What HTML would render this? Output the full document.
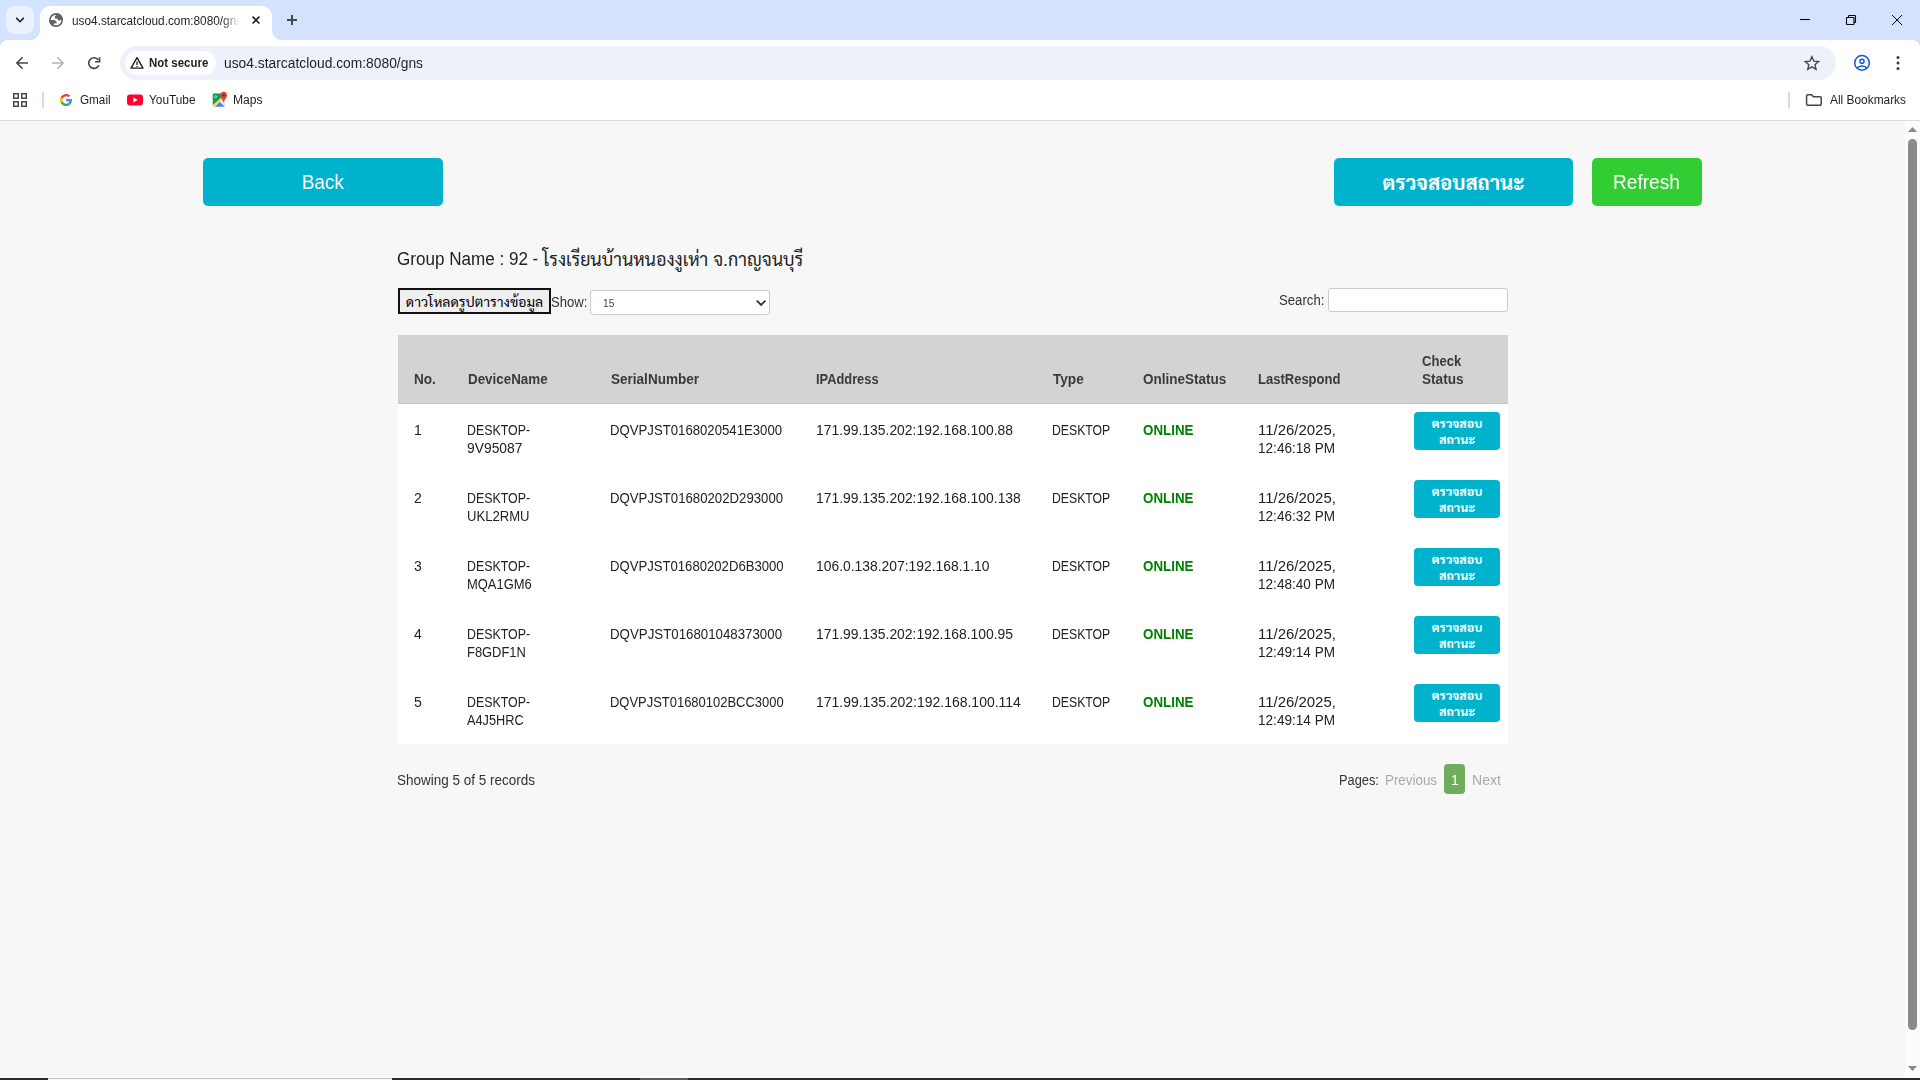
<!DOCTYPE html>
<html lang="th">
<head>
<meta charset="utf-8">
<title>uso4.starcatcloud.com:8080/gns</title>
<style>
*{box-sizing:border-box;margin:0;padding:0}
html,body{width:1920px;height:1080px;overflow:hidden;background:#f7f7f7}
body{position:relative;font-family:"Liberation Sans","Sarabun","Noto Sans Thai","Loma",sans-serif;color:#222}
.abs,.t,svg{position:absolute}
.t{white-space:pre;line-height:1;transform-origin:0 0;display:block}
/* ---------- browser chrome ---------- */
#tabstrip{left:0;top:0;width:1920px;height:52px;background:#d3e3fd}
#tabsearch{left:6px;top:6px;width:28px;height:28px;border-radius:9px;background:#ebf1fd}
#tab{left:40px;top:6px;width:232px;height:34px;background:#fff;border-radius:10px 10px 0 0}
#tab:before,#tab:after{content:"";position:absolute;bottom:0;width:10px;height:10px}
#tab:before{left:-10px;background:radial-gradient(circle at 0 0,rgba(255,255,255,0) 9.5px,#fff 10.5px)}
#tab:after{right:-10px;background:radial-gradient(circle at 100% 0,rgba(255,255,255,0) 9.5px,#fff 10.5px)}
#tabtitle{left:72px;top:14px;width:168px;height:16px;overflow:hidden;-webkit-mask-image:linear-gradient(90deg,#000 150px,transparent 168px);mask-image:linear-gradient(90deg,#000 150px,transparent 168px)}
#toolbar{left:0;top:40px;width:1920px;height:42px;background:#fff;border-radius:8px 8px 0 0}
#omni{left:120px;top:46px;width:1716px;height:34px;border-radius:17px;background:#edf2fa}
#chip{left:125px;top:51px;width:91px;height:24px;border-radius:12px;background:#fff}
#bmbar{left:0;top:82px;width:1920px;height:39px;background:#fff;border-bottom:1px solid #dcdcdc}
.vsep{top:92px;width:2px;height:16px;background:#cddbf7}
/* ---------- page ---------- */
#page{left:0;top:121px;width:1905px;height:957px;background:#f7f7f7}
#sbar{left:1905px;top:121px;width:15px;height:957px;background:#fcfcfc}
#thumb{left:1908px;top:139px;width:9px;height:891px;border-radius:4.5px;background:#8b8b8b}
.btn{border-radius:5px}
.cyan{background:#00b3cc}
.green{background:#32cd32}
.thai{font-family:"Liberation Sans","Sarabun","Noto Sans Thai","Loma",sans-serif;white-space:nowrap;text-align:center}
#dl{overflow:hidden;left:398px;top:288px;width:153px;height:26px;border:2px solid #111;background:#efefef;font-size:14px;line-height:24px;color:#000}
#sel{left:590px;top:290px;width:180px;height:25px;border:1px solid #c8cdd3;border-radius:3px;background:#fff}
#search{left:1328px;top:288px;width:180px;height:24px;border:1px solid #c8cdd3;border-radius:3px;background:#fff}
#thead{left:398px;top:335px;width:1110px;height:69px;background:#d3d3d3;border-bottom:1px solid #c4c4c4}
#tbody{left:398px;top:404px;width:1110px;height:340px;background:#fff}
.rb{overflow:hidden;left:1414px;width:86px;height:38px;border-radius:4px;background:#00b3cc;color:#fff;font-size:12.4px;font-weight:bold;line-height:16px;padding-top:4px}
#pg1{left:1444px;top:764px;width:21px;height:30px;border-radius:4px;background:#6fad5c}
</style>
</head>
<body>
<!-- ===== browser chrome ===== -->
<div id="tabstrip" class="abs"></div>
<div id="tabsearch" class="abs"></div>
<div id="tab" class="abs"></div>
<div id="toolbar" class="abs"></div>
<div id="omni" class="abs"></div>
<div id="chip" class="abs"></div>
<div id="bmbar" class="abs"></div>
<div class="abs vsep" style="left:42px"></div>
<div class="abs vsep" style="left:1788px"></div>
<div id="tabtitle" class="abs"><span class="t" style="left:0;top:0.5px;font-size:12px;color:#1f1f1f;transform:scaleX(0.985)">uso4.starcatcloud.com:8080/gns</span></div>
<!-- ===== page ===== -->
<div id="page" class="abs"></div>
<div id="sbar" class="abs"></div>
<div id="thumb" class="abs"></div>
<div class="abs btn cyan" style="left:203px;top:158px;width:240px;height:48px"></div>
<div class="abs btn cyan thai" style="left:1334px;top:158px;width:239px;height:48px;color:#fff;font-size:20.3px;font-weight:bold;line-height:50px">ตรวจสอบสถานะ</div>
<div class="abs btn green" style="left:1592px;top:158px;width:110px;height:48px"></div>
<div class="abs thai" style="left:542.5px;top:244.5px;font-size:17.85px;line-height:30px;color:#222">โรงเรียนบ้านหนองงูเห่า จ.กาญจนบุรี</div>
<div id="dl" class="abs thai">ดาวโหลดรูปตารางข้อมูล</div>
<div id="sel" class="abs"></div>
<div id="search" class="abs"></div>
<div id="thead" class="abs"></div>
<div id="tbody" class="abs"></div>
<div class="abs rb thai" style="top:412px">ตรวจสอบ<br>สถานะ</div>
<div class="abs rb thai" style="top:480px">ตรวจสอบ<br>สถานะ</div>
<div class="abs rb thai" style="top:548px">ตรวจสอบ<br>สถานะ</div>
<div class="abs rb thai" style="top:616px">ตรวจสอบ<br>สถานะ</div>
<div class="abs rb thai" style="top:684px">ตรวจสอบ<br>สถานะ</div>
<div id="pg1" class="abs"></div>
<!-- tab strip icons -->
<svg style="left:0;top:0" width="320" height="40" viewBox="0 0 320 40" fill="none">
<path d="M16.200 17.900 20 21.700l3.800-3.800" stroke="#1f1f1f" stroke-width="1.600"/>
<clipPath id="gc"><circle cx="56.050" cy="20" r="6.900"/></clipPath>
<circle cx="56.050" cy="20" r="6.150" stroke="#5f6368" stroke-width="1.600"/>
<g clip-path="url(#gc)" fill="#5f6368"><path d="M57.600 13.300 54.800 16.600v1.900h2.200l1.800 2.300 2.100-1.100 2.400.3V12z"/><path d="M49 20.100h5.700l2 2.100v1l-2.900.2-.6 4.200H48z"/></g>
<path d="M252.600 16.700l6.800 6.800M259.400 16.700l-6.800 6.800" stroke="#1f1f1f" stroke-width="1.700"/>
<path d="M287 20h10M292 15v10" stroke="#474747" stroke-width="2"/>
</svg>
<!-- window controls -->
<svg style="left:1780px;top:0" width="140" height="40" viewBox="1780 0 140 40" fill="none" stroke="#000" stroke-width="1.1">
<path d="M1800 19.500h10"/>
<rect x="1846.500" y="17.500" width="7.500" height="7" rx=".7"/>
<path d="M1848.500 17.200V16.200a.7.700 0 0 1 .7-.7h5.600a.7.700 0 0 1 .7.700v5.600a.7.700 0 0 1-.7.700h-.8"/>
<path d="M1892 15l10.100 10.100M1902.100 15l-10.100 10.100" stroke-width="1"/>
</svg>
<!-- toolbar nav icons -->
<svg style="left:0;top:40px" width="240" height="42" viewBox="0 40 240 42" fill="none">
<path d="M28 63H17.200M22.600 57.300 16.900 63l5.700 5.700" stroke="#444746" stroke-width="1.600"/>
<path d="M52 63h10.800M57.400 57.300 63.100 63l-5.700 5.700" stroke="#b4b4b4" stroke-width="1.600"/>
<path d="M98.400 60.100A5.300 5.300 0 1 0 98.900 65.200" stroke="#444746" stroke-width="1.600"/>
<path d="M99.600 57.200v4.500h-4.500" stroke="#444746" stroke-width="1.600"/>
<path d="M137 57.700 143 68.100h-12z" stroke="#1f1f1f" stroke-width="1.400" stroke-linejoin="round"/>
<path d="M137 61.600v3.300M137 65.900v1.200" stroke="#1f1f1f" stroke-width="1.300"/>
</svg>
<!-- toolbar right icons -->
<svg style="left:1790px;top:40px" width="130" height="42" viewBox="1790 40 130 42" fill="none">
<path d="M1811.900 56.700l1.900 4.400 4.800.4-3.650 3.150 1.100 4.700-4.150-2.500-4.150 2.500 1.100-4.700-3.650-3.150 4.800-.4z" stroke="#444746" stroke-width="1.400" stroke-linejoin="miter"/>
<circle cx="1862" cy="62.900" r="7.300" stroke="#0b57d0" stroke-width="1.500"/>
<circle cx="1862" cy="61.300" r="2.100" stroke="#0b57d0" stroke-width="1.400"/>
<path d="M1856.900 68.300c1-1.500 3-2.300 5.100-2.300s4.100.8 5.100 2.300" stroke="#0b57d0" stroke-width="1.400"/>
<circle cx="1898" cy="57.600" r="1.500" fill="#3c3c3c"/><circle cx="1898" cy="63" r="1.500" fill="#3c3c3c"/><circle cx="1898" cy="68.400" r="1.500" fill="#3c3c3c"/>
</svg>
<!-- bookmarks bar icons -->
<svg style="left:0;top:82px" width="240" height="38" viewBox="0 82 240 38" fill="none">
<g stroke="#444746" stroke-width="1.500"><rect x="13.750" y="93.750" width="4.500" height="4.500"/><rect x="21.750" y="93.750" width="4.500" height="4.500"/><rect x="13.750" y="101.750" width="4.500" height="4.500"/><rect x="21.750" y="101.750" width="4.500" height="4.500"/></g>
<g transform="translate(60 93.900) scale(0.254)">
<path fill="#EA4335" d="M24 9.500c3.540 0 6.710 1.220 9.210 3.600l6.850-6.850C35.900 2.380 30.470 0 24 0 14.620 0 6.510 5.380 2.560 13.220l7.980 6.190C12.430 13.720 17.740 9.500 24 9.500z"/>
<path fill="#4285F4" d="M46.980 24.550c0-1.570-.15-3.090-.38-4.550H24v9.020h12.940c-.58 2.960-2.260 5.480-4.780 7.180l7.730 6c4.510-4.180 7.090-10.360 7.090-17.650z"/>
<path fill="#FBBC05" d="M10.530 28.590c-.48-1.450-.76-2.990-.76-4.590s.27-3.140.76-4.590l-7.980-6.190C.92 16.460 0 20.120 0 24c0 3.880.92 7.540 2.560 10.780l7.970-6.190z"/>
<path fill="#34A853" d="M24 48c6.480 0 11.930-2.130 15.890-5.810l-7.730-6c-2.150 1.450-4.920 2.300-8.160 2.300-6.260 0-11.570-4.220-13.470-9.910l-7.980 6.190C6.510 42.620 14.620 48 24 48z"/>
</g>
<rect x="127" y="94.400" width="16" height="11" rx="3" fill="#ff0033"/>
<path d="M133.400 97.400v5l4.400-2.500z" fill="#fff"/>
<g transform="translate(212.500 93.300)">
<path d="M1 .2h7.600v4.400L.2 12V1a.8.800 0 0 1 .8-.8z" fill="#0f9d58"/>
<path d="M.2 12 8.600 4.600l1.300 1.100L1.700 13.500H1a.8.800 0 0 1-.8-.8z" fill="#fdd835"/>
<path d="M2.300 13.500l5.100-5.100 5 5.100z" fill="#4285f4"/>
<path d="M7.400 8.400l2.500-2.700h2.900v7a.8.800 0 0 1-.4.800z" fill="#e4e7ea"/>
<circle cx="3.100" cy="3.500" r="1.100" stroke="#cfe9dc" stroke-width=".7"/>
<path d="M11.100 -1.500c-1.900 0-3.400 1.500-3.400 3.400 0 2.500 2.700 4.300 3.400 7.600.7-3.300 3.400-5.100 3.400-7.600 0-1.900-1.500-3.400-3.400-3.400z" fill="#db4437"/>
<circle cx="11.100" cy="1.900" r="1.200" fill="#7b1f16"/>
</g>
</svg>
<svg style="left:1800px;top:82px" width="40" height="38" viewBox="1800 82 40 38" fill="none">
<path d="M1807.700 94.800h3.900l1.800 1.900h6.700a1.100 1.100 0 0 1 1.100 1.100v6.300a1.100 1.100 0 0 1-1.100 1.100h-12.400a1.100 1.100 0 0 1-1.100-1.100v-8.200a1.100 1.100 0 0 1 1.100-1.100z" stroke="#444746" stroke-width="1.500" stroke-linejoin="round"/>
</svg>
<!-- page: select chevron, scrollbar arrows -->
<svg style="left:750px;top:295px" width="20" height="16" viewBox="750 295 20 16" fill="none"><path d="M756.800 300.600l4.300 4.300 4.300-4.300" stroke="#333" stroke-width="1.800"/></svg>
<svg style="left:1905px;top:121px;z-index:5" width="15" height="957" viewBox="1905 121 15 957"><path d="M1908 132l4.500-5 4.500 5z" fill="#8b8b8b"/><path d="M1908 1066l4.500 5 4.500-5z" fill="#8b8b8b"/></svg>

<span class="t" style="left:149.0px;top:56.64px;font-size:12px;color:#1f1f1f;transform:scaleX(0.9560);font-weight:bold">Not secure</span>
<span class="t" style="left:224.0px;top:56.15px;font-size:14px;color:#1f1f1f;transform:scaleX(0.9872)">uso4.starcatcloud.com:8080/gns</span>
<span class="t" style="left:80.0px;top:93.54px;font-size:12px;color:#1f1f1f;transform:scaleX(0.9763)">Gmail</span>
<span class="t" style="left:148.6px;top:93.54px;font-size:12px;color:#1f1f1f;transform:scaleX(0.9861)">YouTube</span>
<span class="t" style="left:232.6px;top:93.54px;font-size:12px;color:#1f1f1f;transform:scaleX(1.0087)">Maps</span>
<span class="t" style="left:1829.6px;top:93.54px;font-size:12px;color:#1f1f1f;transform:scaleX(0.9910)">All Bookmarks</span>
<span class="t" style="left:302.1px;top:172.47px;font-size:20px;color:#fff;transform:scaleX(0.9419)">Back</span>
<span class="t" style="left:1613.1px;top:172.47px;font-size:20px;color:#fff;transform:scaleX(0.9543)">Refresh</span>
<span class="t" style="left:396.8px;top:250.06px;font-size:18px;color:#222;transform:scaleX(0.9479)">Group Name : 92 -</span>
<span class="t" style="left:551.3px;top:295.15px;font-size:14px;color:#333;transform:scaleX(0.9364)">Show:</span>
<span class="t" style="left:603.4px;top:298.01px;font-size:10.5px;color:#444;transform:scaleX(0.9754)">15</span>
<span class="t" style="left:1279.3px;top:293.15px;font-size:14px;color:#333;transform:scaleX(0.9407)">Search:</span>
<span class="t" style="left:413.8px;top:372.15px;font-size:14px;color:#3a3a3a;transform:scaleX(0.9693);font-weight:bold">No.</span>
<span class="t" style="left:467.5px;top:372.15px;font-size:14px;color:#3a3a3a;transform:scaleX(0.9565);font-weight:bold">DeviceName</span>
<span class="t" style="left:610.8px;top:372.15px;font-size:14px;color:#3a3a3a;transform:scaleX(0.9671);font-weight:bold">SerialNumber</span>
<span class="t" style="left:816.3px;top:372.15px;font-size:14px;color:#3a3a3a;transform:scaleX(0.9169);font-weight:bold">IPAddress</span>
<span class="t" style="left:1052.8px;top:372.15px;font-size:14px;color:#3a3a3a;transform:scaleX(0.9714);font-weight:bold">Type</span>
<span class="t" style="left:1142.5px;top:372.15px;font-size:14px;color:#3a3a3a;transform:scaleX(0.9634);font-weight:bold">OnlineStatus</span>
<span class="t" style="left:1258.1px;top:372.15px;font-size:14px;color:#3a3a3a;transform:scaleX(0.9292);font-weight:bold">LastRespond</span>
<span class="t" style="left:1422.1px;top:354.15px;font-size:14px;color:#3a3a3a;transform:scaleX(0.9312);font-weight:bold">Check</span>
<span class="t" style="left:1422.1px;top:372.15px;font-size:14px;color:#3a3a3a;transform:scaleX(0.9705);font-weight:bold">Status</span>
<span class="t" style="left:413.8px;top:423.15px;font-size:14px;color:#222;transform:scaleX(1.0028)">1</span>
<span class="t" style="left:467.4px;top:423.15px;font-size:14px;color:#222;transform:scaleX(0.8851)">DESKTOP-</span>
<span class="t" style="left:467.4px;top:441.15px;font-size:14px;color:#222;transform:scaleX(0.9893)">9V95087</span>
<span class="t" style="left:609.6px;top:423.15px;font-size:14px;color:#222;transform:scaleX(0.9406)">DQVPJST0168020541E3000</span>
<span class="t" style="left:816.3px;top:423.15px;font-size:14px;color:#222;transform:scaleX(0.9924)">171.99.135.202:192.168.100.88</span>
<span class="t" style="left:1052.4px;top:423.15px;font-size:14px;color:#222;transform:scaleX(0.8744)">DESKTOP</span>
<span class="t" style="left:1142.5px;top:423.15px;font-size:14px;color:#008000;transform:scaleX(0.9532);font-weight:bold">ONLINE</span>
<span class="t" style="left:1258.1px;top:423.15px;font-size:14px;color:#222;transform:scaleX(1.0683)">11/26/2025,</span>
<span class="t" style="left:1258.1px;top:441.15px;font-size:14px;color:#222;transform:scaleX(0.9699)">12:46:18 PM</span>
<span class="t" style="left:413.8px;top:491.15px;font-size:14px;color:#222;transform:scaleX(1.0028)">2</span>
<span class="t" style="left:467.4px;top:491.15px;font-size:14px;color:#222;transform:scaleX(0.8851)">DESKTOP-</span>
<span class="t" style="left:467.4px;top:509.15px;font-size:14px;color:#222;transform:scaleX(0.9337)">UKL2RMU</span>
<span class="t" style="left:609.6px;top:491.15px;font-size:14px;color:#222;transform:scaleX(0.9422)">DQVPJST01680202D293000</span>
<span class="t" style="left:816.3px;top:491.15px;font-size:14px;color:#222;transform:scaleX(0.9928)">171.99.135.202:192.168.100.138</span>
<span class="t" style="left:1052.4px;top:491.15px;font-size:14px;color:#222;transform:scaleX(0.8744)">DESKTOP</span>
<span class="t" style="left:1142.5px;top:491.15px;font-size:14px;color:#008000;transform:scaleX(0.9532);font-weight:bold">ONLINE</span>
<span class="t" style="left:1258.1px;top:491.15px;font-size:14px;color:#222;transform:scaleX(1.0683)">11/26/2025,</span>
<span class="t" style="left:1258.1px;top:509.15px;font-size:14px;color:#222;transform:scaleX(0.9699)">12:46:32 PM</span>
<span class="t" style="left:413.8px;top:559.15px;font-size:14px;color:#222;transform:scaleX(1.0028)">3</span>
<span class="t" style="left:467.4px;top:559.15px;font-size:14px;color:#222;transform:scaleX(0.8851)">DESKTOP-</span>
<span class="t" style="left:467.4px;top:577.15px;font-size:14px;color:#222;transform:scaleX(0.9253)">MQA1GM6</span>
<span class="t" style="left:609.6px;top:559.15px;font-size:14px;color:#222;transform:scaleX(0.9373)">DQVPJST01680202D6B3000</span>
<span class="t" style="left:816.3px;top:559.15px;font-size:14px;color:#222;transform:scaleX(0.9908)">106.0.138.207:192.168.1.10</span>
<span class="t" style="left:1052.4px;top:559.15px;font-size:14px;color:#222;transform:scaleX(0.8744)">DESKTOP</span>
<span class="t" style="left:1142.5px;top:559.15px;font-size:14px;color:#008000;transform:scaleX(0.9532);font-weight:bold">ONLINE</span>
<span class="t" style="left:1258.1px;top:559.15px;font-size:14px;color:#222;transform:scaleX(1.0683)">11/26/2025,</span>
<span class="t" style="left:1258.1px;top:577.15px;font-size:14px;color:#222;transform:scaleX(0.9699)">12:48:40 PM</span>
<span class="t" style="left:413.8px;top:627.15px;font-size:14px;color:#222;transform:scaleX(1.0028)">4</span>
<span class="t" style="left:467.4px;top:627.15px;font-size:14px;color:#222;transform:scaleX(0.8851)">DESKTOP-</span>
<span class="t" style="left:467.4px;top:645.15px;font-size:14px;color:#222;transform:scaleX(0.9225)">F8GDF1N</span>
<span class="t" style="left:609.6px;top:627.15px;font-size:14px;color:#222;transform:scaleX(0.9485)">DQVPJST016801048373000</span>
<span class="t" style="left:816.3px;top:627.15px;font-size:14px;color:#222;transform:scaleX(0.9924)">171.99.135.202:192.168.100.95</span>
<span class="t" style="left:1052.4px;top:627.15px;font-size:14px;color:#222;transform:scaleX(0.8744)">DESKTOP</span>
<span class="t" style="left:1142.5px;top:627.15px;font-size:14px;color:#008000;transform:scaleX(0.9532);font-weight:bold">ONLINE</span>
<span class="t" style="left:1258.1px;top:627.15px;font-size:14px;color:#222;transform:scaleX(1.0683)">11/26/2025,</span>
<span class="t" style="left:1258.1px;top:645.15px;font-size:14px;color:#222;transform:scaleX(0.9699)">12:49:14 PM</span>
<span class="t" style="left:413.8px;top:695.15px;font-size:14px;color:#222;transform:scaleX(1.0028)">5</span>
<span class="t" style="left:467.4px;top:695.15px;font-size:14px;color:#222;transform:scaleX(0.8851)">DESKTOP-</span>
<span class="t" style="left:467.4px;top:713.15px;font-size:14px;color:#222;transform:scaleX(0.9088)">A4J5HRC</span>
<span class="t" style="left:609.6px;top:695.15px;font-size:14px;color:#222;transform:scaleX(0.9255)">DQVPJST01680102BCC3000</span>
<span class="t" style="left:816.3px;top:695.15px;font-size:14px;color:#222;transform:scaleX(0.9978)">171.99.135.202:192.168.100.114</span>
<span class="t" style="left:1052.4px;top:695.15px;font-size:14px;color:#222;transform:scaleX(0.8744)">DESKTOP</span>
<span class="t" style="left:1142.5px;top:695.15px;font-size:14px;color:#008000;transform:scaleX(0.9532);font-weight:bold">ONLINE</span>
<span class="t" style="left:1258.1px;top:695.15px;font-size:14px;color:#222;transform:scaleX(1.0683)">11/26/2025,</span>
<span class="t" style="left:1258.1px;top:713.15px;font-size:14px;color:#222;transform:scaleX(0.9699)">12:49:14 PM</span>
<span class="t" style="left:396.8px;top:773.15px;font-size:14px;color:#333;transform:scaleX(0.9637)">Showing 5 of 5 records</span>
<span class="t" style="left:1338.6px;top:773.15px;font-size:14px;color:#333;transform:scaleX(0.9142)">Pages:</span>
<span class="t" style="left:1385.1px;top:773.15px;font-size:14px;color:#aaa;transform:scaleX(0.9550)">Previous</span>
<span class="t" style="left:1451.3px;top:773.15px;font-size:14px;color:#fff;transform:scaleX(1.0028)">1</span>
<span class="t" style="left:1472.3px;top:773.15px;font-size:14px;color:#aaa;transform:scaleX(1.0056)">Next</span>

<!-- bottom taskbar edge -->
<div class="abs" style="left:0;top:1077px;width:1920px;height:1px;background:#fdfdfd"></div>
<div class="abs" style="left:0;top:1078px;width:1920px;height:2px;background:#2a2a2a"></div>
<div class="abs" style="left:48px;top:1078px;width:344px;height:2px;background:linear-gradient(#c2c2c2 50%,#f7f7f7 50%)"></div>
<div class="abs" style="left:640px;top:1078px;width:48px;height:2px;background:#5a5a5a"></div>
</body>
</html>
